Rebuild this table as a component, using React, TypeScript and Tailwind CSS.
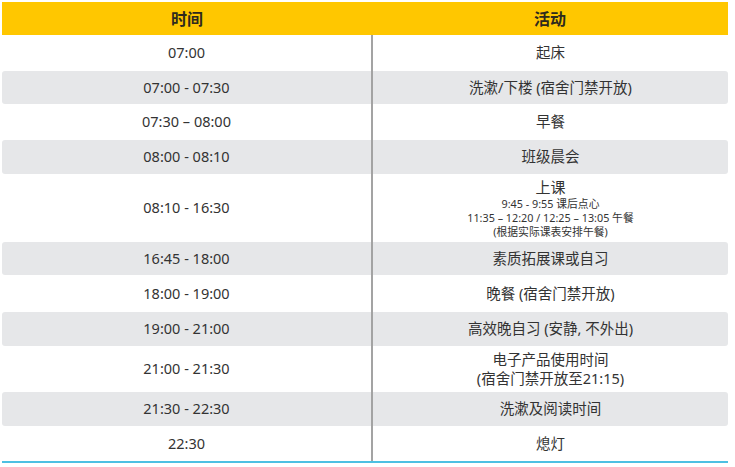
import React from "react";

type Row = { time: string; h: number; grey?: boolean; act: React.ReactNode };

const rows: Row[] = [
  { time: "07:00", h: 36, act: "起床" },
  { time: "07:00 - 07:30", h: 33, grey: true, act: "洗漱/下楼 (宿舍门禁开放)" },
  { time: "07:30 – 08:00", h: 36, act: "早餐" },
  { time: "08:00 - 08:10", h: 34, grey: true, act: "班级晨会" },
  {
    time: "08:10 - 16:30",
    h: 68,
    act: (
      <div className="flex flex-col items-center">
        <div className="text-[15px] leading-[19px]">上课</div>
        <div className="text-[10.8px] leading-[14px]">9:45 - 9:55 课后点心</div>
        <div className="text-[10.8px] leading-[14px]">11:35 – 12:20 / 12:25 – 13:05 午餐</div>
        <div className="text-[10.8px] leading-[14px]">(根据实际课表安排午餐)</div>
      </div>
    ),
  },
  { time: "16:45 - 18:00", h: 33, grey: true, act: "素质拓展课或自习" },
  { time: "18:00 - 19:00", h: 37, act: "晚餐 (宿舍门禁开放)" },
  { time: "19:00 - 21:00", h: 34, grey: true, act: "高效晚自习 (安静, 不外出)" },
  {
    time: "21:00 - 21:30",
    h: 46,
    act: (
      <div className="flex flex-col items-center leading-[19px]">
        <div>电子产品使用时间</div>
        <div>(宿舍门禁开放至21:15)</div>
      </div>
    ),
  },
  { time: "21:30 - 22:30", h: 34, grey: true, act: "洗漱及阅读时间" },
  { time: "22:30", h: 35, act: "熄灯" },
];

export default function App() {
  return (
    <div
      className="w-[735px] h-[467px] bg-white text-[#333333] pt-[2px] pl-[2px]"
      style={{ fontFamily: '"Noto Sans", "Noto Sans CJK SC", sans-serif' }}
    >
      <div className="w-[726px] flex flex-col">
        <div className="flex h-[33px] bg-[#FFC700] font-bold text-[16px] text-[#2e2a1e]">
          <div className="w-[370px] flex items-center justify-center">时间</div>
          <div className="flex-1 flex items-center justify-center">活动</div>
        </div>
        <div className="flex flex-col border-b-2 border-[#4DC0E2]">
          {rows.map((r, i) => (
            <div
              key={i}
              className={`flex text-[14.5px] ${r.grey ? "bg-[#E6E7E9] rounded-[3px]" : "bg-white"}`}
              style={{ height: r.h }}
            >
              <div className="w-[369px] flex items-center justify-center">{r.time}</div>
              <div className="w-[2px] bg-[#A3A3A3]" />
              <div className="flex-1 flex items-center justify-center text-center">{r.act}</div>
            </div>
          ))}
        </div>
      </div>
    </div>
  );
}
